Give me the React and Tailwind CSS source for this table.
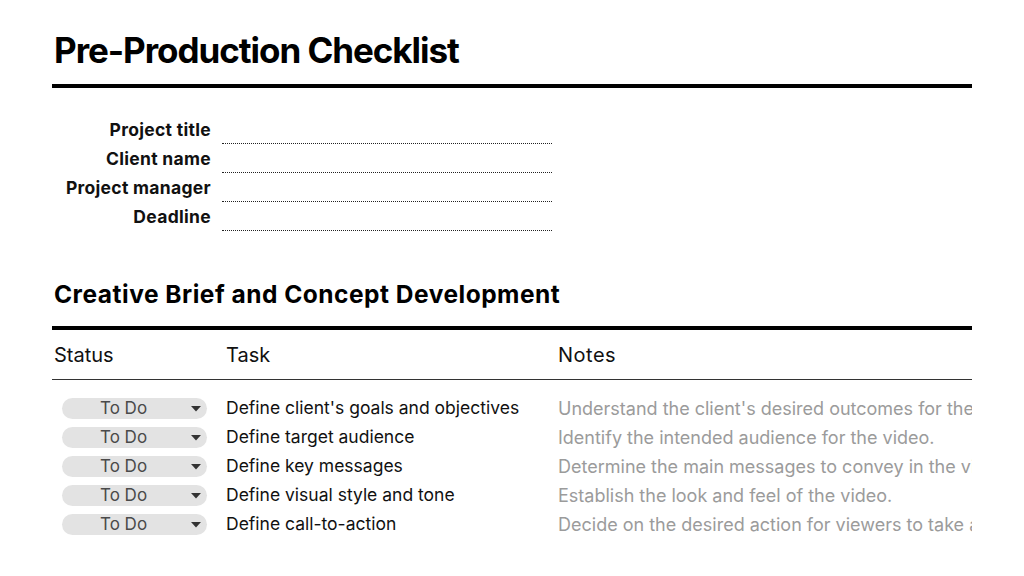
import React from 'react';

const fields = ['Project title', 'Client name', 'Project manager', 'Deadline'];

const tasks = [
  { task: "Define client's goals and objectives", notes: "Understand the client's desired outcomes for the video project." },
  { task: 'Define target audience', notes: 'Identify the intended audience for the video.' },
  { task: 'Define key messages', notes: 'Determine the main messages to convey in the video content.' },
  { task: 'Define visual style and tone', notes: 'Establish the look and feel of the video.' },
  { task: 'Define call-to-action', notes: 'Decide on the desired action for viewers to take after watching.' },
];

const StatusPill = () => (
  <div className="ml-[10px] flex h-[21px] w-[145px] items-center rounded-full bg-[#e3e3e3]">
    <span className="ml-[38px] text-[17px] leading-none text-[#4a4a4a]">To Do</span>
    <svg className="ml-auto mr-[6px]" width="10" height="6" viewBox="0 0 10 6">
      <path d="M0 0h10L5 5.5z" fill="#333" />
    </svg>
  </div>
);

const App = () => {
  return (
    <div className="h-[576px] w-[1024px] overflow-hidden bg-white pl-[52px] text-[#111]" style={{ fontFamily: 'Inter, "Liberation Sans", sans-serif' }}>
      <div className="w-[920px]">
        <h1 className="ml-[2px] pt-[29px] text-[35px] font-bold leading-[42px] tracking-[-1.05px] text-black">Pre-Production Checklist</h1>
        <div className="mt-[13px] h-[4px] bg-black" />

        <div className="mt-[27px]">
          {fields.map((f) => (
            <div key={f} className="flex h-[29px]">
              <div className="w-[159px] text-right text-[17.5px] font-bold leading-[30px] tracking-[0.3px]">{f}</div>
              <div className="ml-[11px] w-[330px] border-b border-dotted border-[#222]" />
            </div>
          ))}
        </div>

        <h2 className="ml-[2px] mt-[48px] text-[24.5px] font-bold leading-[30px] tracking-[0.5px] text-black">Creative Brief and Concept Development</h2>
        <div className="mt-[17px] h-[4px] bg-black" />

        <div className="flex h-[49px] items-center text-[20px]">
          <div className="w-[174px] pl-[2px]">Status</div>
          <div className="w-[332px]">Task</div>
          <div className="tracking-[0.5px]">Notes</div>
        </div>
        <div className="h-px bg-[#333]" />

        <div className="mt-[14px]">
          {tasks.map((t, i) => (
            <div key={i} className="flex h-[29px] items-center">
              <div className="w-[174px]">
                <StatusPill />
              </div>
              <div className="w-[332px] whitespace-nowrap text-[17.5px] text-[#111]">{t.task}</div>
              <div className="w-[414px] overflow-hidden whitespace-nowrap text-[18px] text-[#9b9b9b]">{t.notes}</div>
            </div>
          ))}
        </div>
      </div>
    </div>
  );
};

export default App;
